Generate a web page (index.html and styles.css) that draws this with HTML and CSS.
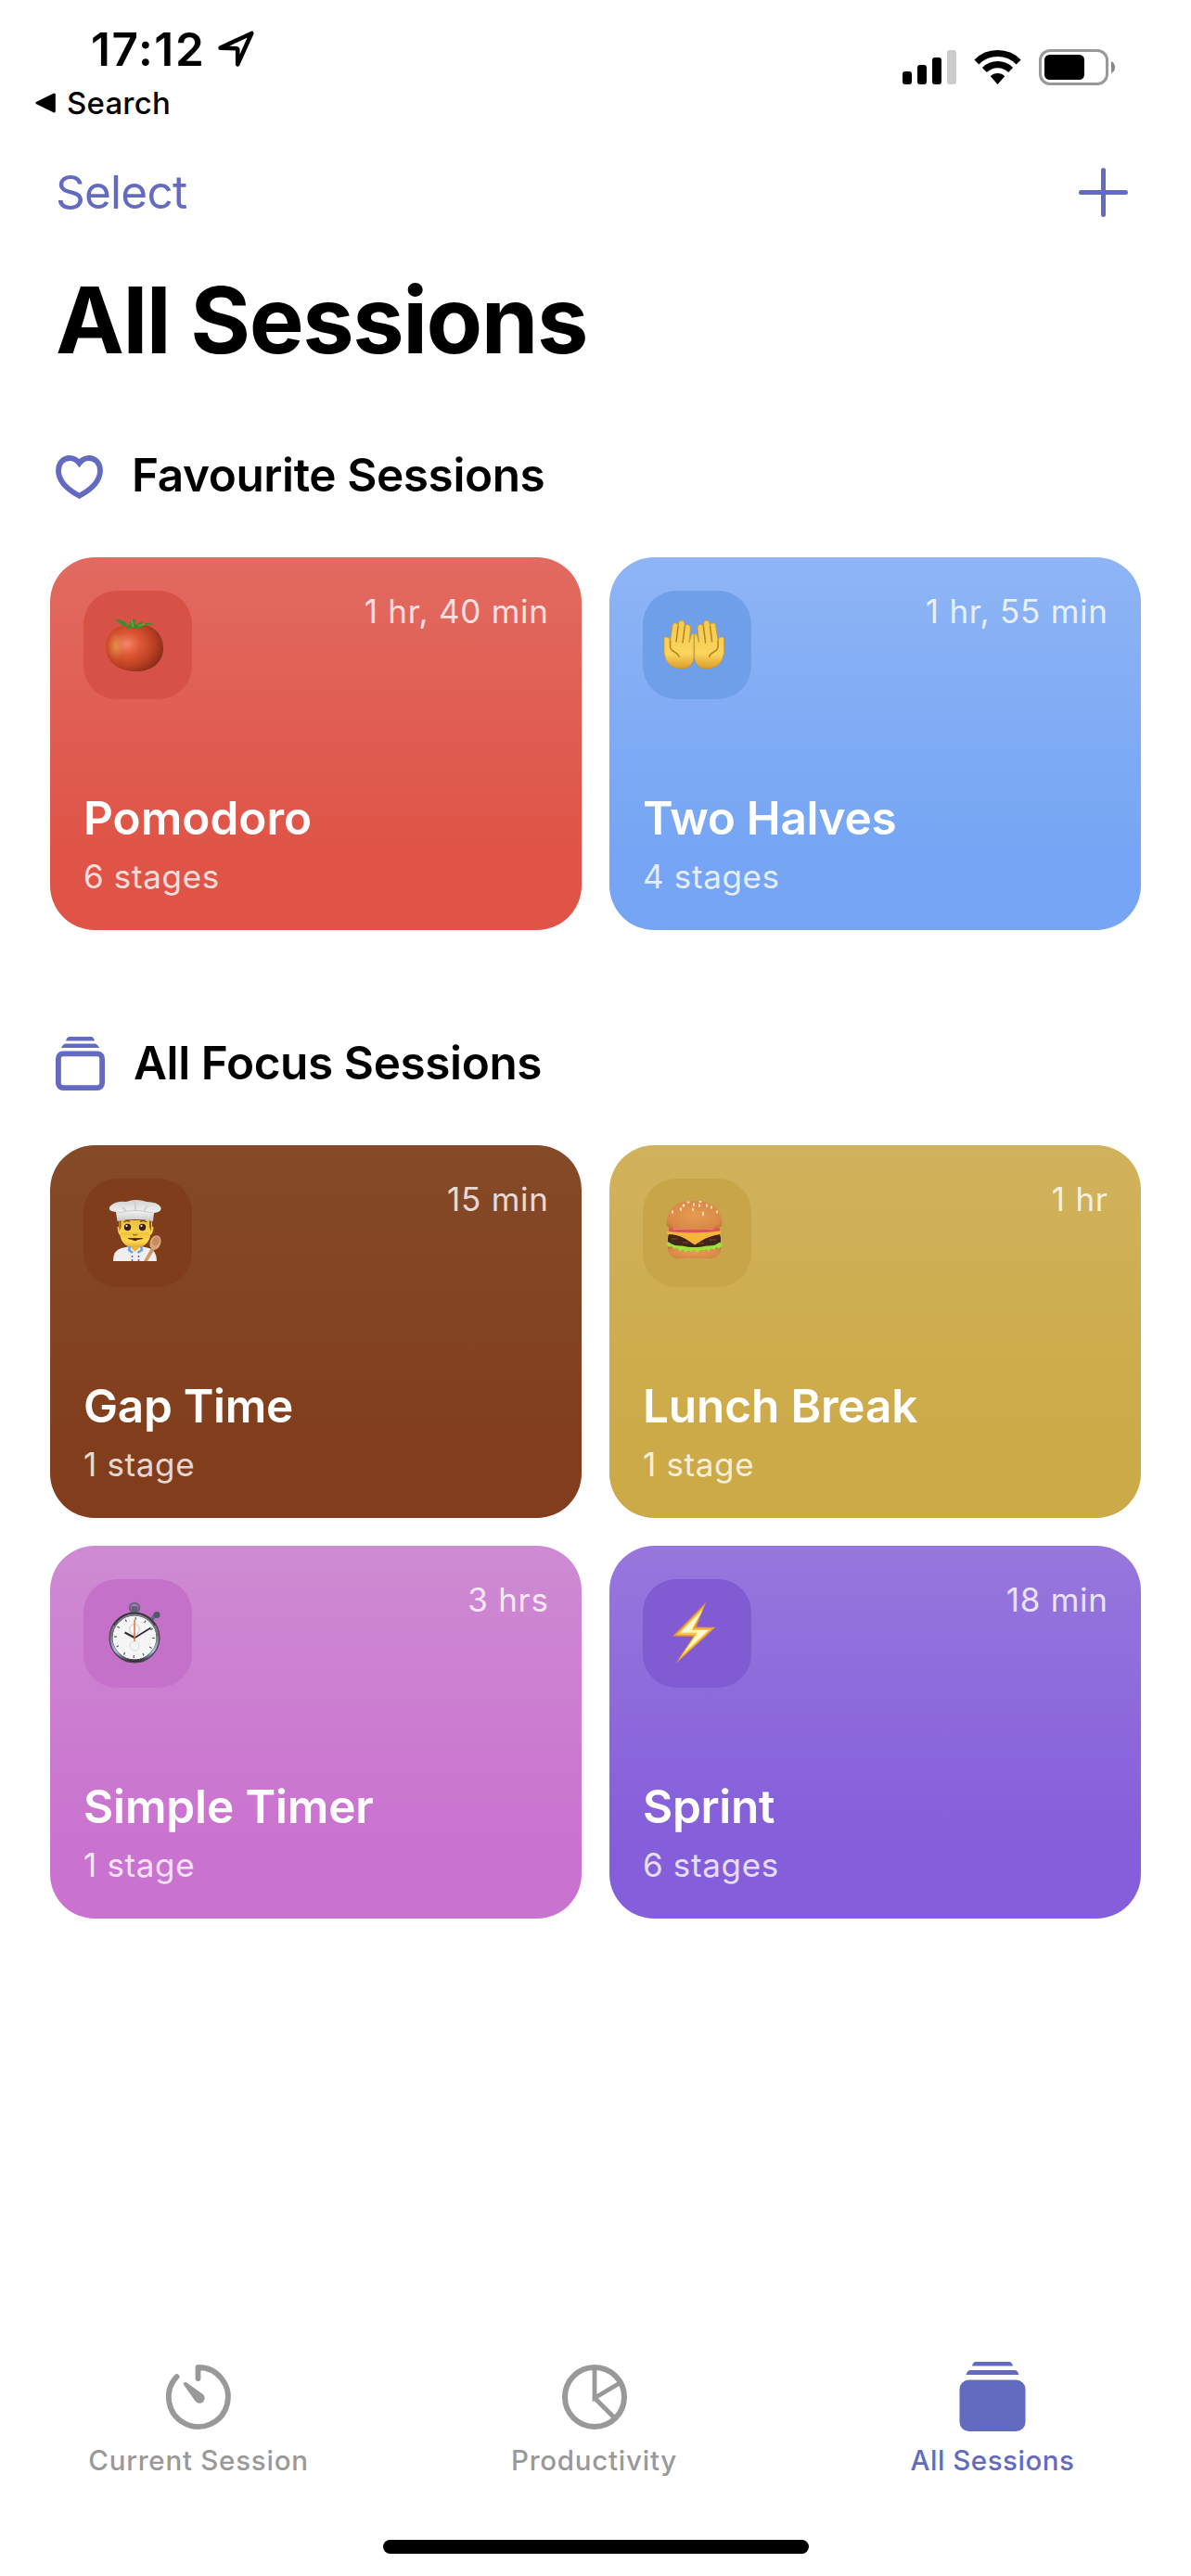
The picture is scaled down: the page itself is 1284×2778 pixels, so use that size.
FILE: index.html
```html
<!DOCTYPE html>
<html lang="en">
<head>
<meta charset="utf-8">
<title>All Sessions</title>
<link rel="stylesheet" href="styles.css">
</head>
<body>
<div class="screen">
  <header class="status">
    <div class="status-left">
      <div class="clock">
        <span class="time">17:12</span>
        <svg class="location" width="40" height="40" viewBox="0 0 40 40"><path d="M3.6 18.6 37.2 3 22.2 36.4V20.2L20.8 19.2Z" fill="none" stroke="#000" stroke-width="4.6" stroke-linejoin="round"/></svg>
      </div>
      <div class="back">
        <svg width="22" height="22" viewBox="0 0 22 22"><path d="M2 11 20.3 2V20Z" stroke="#000" stroke-width="3" stroke-linejoin="round"/></svg>
        <span>Search</span>
      </div>
    </div>
    <div class="status-right">
      <svg class="signal" width="58" height="37" viewBox="0 0 58 37"><rect y="23" width="10" height="14" rx="3"/><rect x="16" y="16" width="10" height="21" rx="3"/><rect x="32" y="8" width="10" height="29" rx="3"/><rect x="48" width="10" height="37" rx="3" fill="#ccc"/></svg>
      <svg class="wifi" width="51" height="37" viewBox="0 0 51 37"><path d="M2.9 12.9A32 32 0 0 1 48.1 12.9M11.4 21.4A20 20 0 0 1 39.6 21.4" fill="none" stroke="#000" stroke-width="7.1"/><path d="M17.8 28.2A11 11 0 0 1 33.2 28.2L25.5 37Z"/></svg>
      <svg class="battery" width="82" height="39" viewBox="0 0 82 39"><rect x="1.5" y="1.5" width="72" height="36" rx="10.5" fill="none" stroke="#999" stroke-width="3"/><rect x="6" y="6" width="43" height="27" rx="5.5"/><path d="M78 13Q82 15 82 19.5T78 26Z" fill="#888"/></svg>
    </div>
  </header>

  <nav class="nav">
    <a class="select">Select</a>
    <svg width="53" height="53" viewBox="0 0 53 53"><path d="M26.5 2.5V50.5M2.5 26.5H50.5" stroke="#636bc0" stroke-width="5" stroke-linecap="round"/></svg>
  </nav>

  <h1>All Sessions</h1>

  <section>
    <h2><svg class="heart" width="51" height="47" viewBox="0 0 51 47"><path d="M25.5 8.6C22.6 4.6 19 3 15 3 8 3 3 8.5 3 16.5 3 27 12 36.500 25.500 43.800 39 36.500 48 27 48 16.500 48 8.500 43 3 36 3 32 3 28.400 4.600 25.500 8.600Z" fill="none" stroke="#636bc0" stroke-width="5.800"/></svg>Favourite Sessions</h2>
    <div class="grid">
      <article class="card red">
        <div class="top">
          <div class="tile">
            <svg width="117" height="117" viewBox="0 0 117 117">
              <defs><radialGradient id="tomato" cx=".36" cy=".42" r=".7"><stop offset="0" stop-color="#f3866a"/><stop offset=".35" stop-color="#dc5633"/><stop offset=".7" stop-color="#b93f21"/><stop offset="1" stop-color="#7e2a18"/></radialGradient>
              <radialGradient id="tomatoGlow" cx=".5" cy=".5" r=".5"><stop offset="0" stop-color="#dca04c" stop-opacity=".8"/><stop offset="1" stop-color="#dc8a3c" stop-opacity="0"/></radialGradient></defs>
              <path d="M24 61C24 45 35 36 53 37 73 34 86 45 86 62 86 77 74 87 57 87 38 87 24 77 24 61Z" fill="url(#tomato)"/>
              <ellipse cx="35" cy="60" rx="9" ry="15" fill="url(#tomatoGlow)"/>
              <path d="M34 30Q43 31 49 38L52 31 56 31 55 38Q62 32 65 34L59 38Q68 33 76 36 66 37 60 41L52 40 47 42 48 39Q41 39 34 30Z" fill="#3f8b2d"/>
              <path d="M52 32 53.500 39M59 38 66 36" stroke="#67b545" stroke-width="1.200"/>
            </svg>
          </div>
          <span class="duration">1 hr, 40 min</span>
        </div>
        <h3>Pomodoro</h3><p>6 stages</p>
      </article>
      <article class="card blue">
        <div class="top">
          <div class="tile">
            <svg width="117" height="117" viewBox="0 0 117 117">
              <defs><linearGradient id="skin" x2="0" y2="1"><stop offset="0" stop-color="#f3cb50"/><stop offset=".7" stop-color="#fad45c"/><stop offset="1" stop-color="#dc9c28"/></linearGradient>
              <g id="hand"><path d="M23 53Q23 49 26 50 29 50 29.500 54L32 38Q32.500 34 36 35 39 36 38 39 38 32 42 32 45.500 32 45.200 39 46 36 49 36.500 52 37 51.500 41L50 56 52 49Q53 45 55 47V72Q54 84 41 84 25 83 23 67Z" fill="url(#skin)" stroke="#cf9426" stroke-width=".8"/><path d="M38 39 36 55M45.200 39 43 56M29.500 54V61Q30 64 34 66 38 68 39 71" fill="none" stroke="#bd7f1e" stroke-width="1.500" stroke-linecap="round"/></g></defs>
              <use href="#hand"/><use href="#hand" transform="matrix(-1 0 0 1 110.600 0)"/>
            </svg>
          </div>
          <span class="duration">1 hr, 55 min</span>
        </div>
        <h3>Two Halves</h3><p>4 stages</p>
      </article>
    </div>
  </section>

  <section>
    <h2><svg class="stack" width="53" height="58" viewBox="0 0 53 58" fill="#636bc0"><path d="M11 4.500Q12 0 15 0H38Q41 0 42 4.500ZM6 12Q8 7.500 11 7.500H42Q45 7.500 47 12Z"/><rect x="2.900" y="18.400" width="47.200" height="36.700" rx="5" fill="none" stroke="#636bc0" stroke-width="5.800"/></svg>All Focus Sessions</h2>
    <div class="grid">
      <article class="card brown">
        <div class="top">
          <div class="tile">
            <svg width="117" height="117" viewBox="0 0 117 117">
              <defs><linearGradient id="hat" x2="0" y2="1"><stop offset="0" stop-color="#d2d2d2"/><stop offset=".55" stop-color="#f0f0f0"/><stop offset="1" stop-color="#c8c8c8"/></linearGradient>
              <linearGradient id="face" x2="0" y2="1"><stop offset="0" stop-color="#ecc13c"/><stop offset=".6" stop-color="#ffd84e"/><stop offset="1" stop-color="#e5ab2c"/></linearGradient></defs>
              <path d="M38 45H74V52H75.500Q75 60 72 61 70 74 55.700 74 42 74 39.500 61 37 60 36.500 52H38Z" fill="url(#face)"/>
              <path d="M38.500 44V57L40.500 52V45M73 44V57L71 52V45" fill="#8f5b23"/>
              <path d="M49 69H62V80H49Z" fill="#eab736"/>
              <path d="M39.500 61C42 72 48 74 55.700 74S69.500 72 72 61L70 58H41Z" fill="url(#face)"/>
              <path d="M32 89Q32 77 41 75L50 73 55.500 79 62 73 71 75Q79 78 79 89Z" fill="#efeff0"/>
              <path d="M50 73 49 77 53 80M62 73 63 77 58.500 80" fill="none" stroke="#6f9bdf" stroke-width="2.500"/>
              <g fill="#4267c0"><circle cx="52.500" cy="84" r="1"/><circle cx="59.500" cy="84" r="1"/><circle cx="52.500" cy="88" r="1"/><circle cx="59.500" cy="88" r="1"/></g>
              <path d="M36.500 46 35 36Q25 35 28.500 30 34 24 46 25 57 21 68 25 80 25 83.500 31 85 36 76 37L75 46Q56 42 36.500 46Z" fill="url(#hat)"/>
              <path d="M37 37Q56 32 75 37" fill="none" stroke="#c6c6c6" stroke-width="1.200"/><path d="M42 31 46 35M56 26V34M69 29 65 35" stroke="#c3c3c3" stroke-width="1.200"/>
              <g fill="#3b210b"><circle cx="47.500" cy="52.500" r="3.700"/><circle cx="63.500" cy="52.500" r="3.700"/></g><g fill="#fff"><circle cx="46.500" cy="51" r="1.100"/><circle cx="62.500" cy="51" r="1.100"/></g>
              <path d="M43.500 47Q47 44.500 50 46.500M61 46.500Q65 44.500 68 47" fill="none" stroke="#7b4a1b" stroke-width="1.500"/>
              <path d="M53 60Q55.500 62 58 60" fill="none" stroke="#ae7418" stroke-width="1.500"/><path d="M48 64.500H64L59 65.500Q55.500 68 52 65.500Z" fill="#3b1a0a" stroke="#643311"/>
              <path d="M65 89 73.500 74 77 76 69 89Z" fill="#cf976a"/><ellipse cx="77.500" cy="69" rx="5.800" ry="8" transform="rotate(20 77.500 69)" fill="#d9a477"/><ellipse cx="78" cy="67.500" rx="3.600" ry="5" transform="rotate(20 78 67.500)" fill="#c68b60"/>
            </svg>
          </div>
          <span class="duration">15 min</span>
        </div>
        <h3>Gap Time</h3><p>1 stage</p>
      </article>
      <article class="card gold">
        <div class="top">
          <div class="tile">
            <svg width="117" height="117" viewBox="0 0 117 117">
              <defs><radialGradient id="bun" cx=".5" cy=".5" r=".7"><stop offset="0" stop-color="#e79a50"/><stop offset=".7" stop-color="#d98a48"/><stop offset="1" stop-color="#b5672f"/></radialGradient></defs>
              <path d="M27 73H84V77Q83 86 70 86H41Q28 86 27 77Z" fill="url(#bun)"/>
              <rect x="27" y="57" width="57" height="17" rx="7" fill="#42261a"/>
              <path d="M31 65H37M43 69H49M60 70H66M72 66H79M46 64H49" stroke="#6d3f29" stroke-width="1.500"/>
              <path d="M25.500 70Q28 67 30 70 35 73 42 72.500 56 76 69 72.500 78 73 82 69 87 69 85 73 83 74 82 76 79 72 77 77 73 73 71 79 68 74 66 78 62 75 59 80 56 75 52 79 49 75 46 80 43 74 40 79 37 73 34 76 31 72 28 74Z" fill="#9ce33f"/>
              <rect x="28" y="51" width="55" height="9" rx="4" fill="#df555b"/><path d="M33 54H76" stroke="#f79090" stroke-width="1.500"/>
              <path d="M25.500 57Q54 60 85 56.500L83 60Q72 62 65 66L56 71.500 46 65Q37 60 27 60Z" fill="#f6b63c"/>
              <path d="M25.500 49Q26 24 55.500 24T85.500 49Q86 53 78 53.500 55 57 33 53.500 25 53 25.500 49Z" fill="url(#bun)"/>
              <g fill="#f9e3b7"><ellipse cx="44" cy="29" rx="1.300" ry="1.800"/><ellipse cx="49" cy="25.500" rx="1.600" ry="1.100"/><ellipse cx="55" cy="28" rx="1" ry="1.900"/><ellipse cx="61" cy="29" rx="1" ry="1.900"/><ellipse cx="69" cy="29" rx="1.200" ry="1.700"/><ellipse cx="62" cy="25" rx="1.600" ry="1"/><ellipse cx="41" cy="33" rx="1" ry="2"/><ellipse cx="54" cy="33.500" rx="1" ry="2"/><ellipse cx="65" cy="38" rx="1" ry="2.400"/><ellipse cx="74" cy="31" rx="1" ry="1.800"/><ellipse cx="32" cy="36" rx="1" ry="2"/><ellipse cx="80" cy="36" rx="1" ry="1.800"/></g>
            </svg>
          </div>
          <span class="duration">1 hr</span>
        </div>
        <h3>Lunch Break</h3><p>1 stage</p>
      </article>
      <article class="card pink">
        <div class="top">
          <div class="tile">
            <svg width="117" height="117" viewBox="0 0 117 117">
              <defs><linearGradient id="rim" x1="0" y1="0" x2="0" y2="1"><stop offset="0" stop-color="#7f8598"/><stop offset=".45" stop-color="#737373"/><stop offset=".8" stop-color="#a9c2e2"/><stop offset="1" stop-color="#34323a"/></linearGradient></defs>
              <circle cx="55" cy="31" r="5.200" fill="none" stroke="#66687c" stroke-width="2"/><rect x="51.500" y="29" width="7" height="8" rx="2" fill="#5d6277"/>
              <path d="M73 44 78 38" stroke="#666b7b" stroke-width="4"/><circle cx="79" cy="38.500" r="3.500" fill="#545969"/>
              <circle cx="55" cy="63" r="25.500" fill="#f5f5f5" stroke="#4a4450" stroke-width="4"/><circle cx="55" cy="63" r="25" fill="none" stroke="url(#rim)" stroke-width="2.500"/>
              <path d="M33 50A25 25 0 0 1 77 50" fill="none" stroke="#3e3239" stroke-width="1.500"/>
              <circle cx="55" cy="63" r="20.500" fill="none" stroke="#555" stroke-width="2.800" stroke-dasharray="1.200 9.534"/>
              <circle cx="55" cy="54" r="5.500" fill="none" stroke="#ccc"/><circle cx="55" cy="72" r="5" fill="none" stroke="#ddd"/>
              <path d="M55 63 44.500 57.500" stroke="#2d2d2d" stroke-width="2"/><path d="M54 64 72.500 52.500" stroke="#2d2d3c" stroke-width="1.700"/><path d="M55 44V67" stroke="#ec6d3c" stroke-width="1.500"/>
            </svg>
          </div>
          <span class="duration">3 hrs</span>
        </div>
        <h3>Simple Timer</h3><p>1 stage</p>
      </article>
      <article class="card purple">
        <div class="top">
          <div class="tile">
            <svg width="117" height="117" viewBox="0 0 117 117">
              <defs><linearGradient id="bolt" x2="1" y2="1"><stop offset=".35" stop-color="#fbfbd8"/><stop offset=".5" stop-color="#fdf6a5"/><stop offset=".7" stop-color="#fffde0"/></linearGradient></defs>
              <path d="M68.200 25 57.500 51.500 78.500 51.800 35.500 91 54.500 61.800 32.300 61.500Z" fill="#ec9c33"/>
              <path d="M66 29.500 54 53.600 74.500 53.500 39 86.500 57 60 36.500 60Z" fill="#fbc93e"/>
              <path d="M64.500 33 52.500 55 70.500 55 44 80 59 57.800 40.500 57.500Z" fill="url(#bolt)"/>
            </svg>
          </div>
          <span class="duration">18 min</span>
        </div>
        <h3>Sprint</h3><p>6 stages</p>
      </article>
    </div>
  </section>

  <footer class="tabs">
    <a class="tab"><svg width="80" height="80" viewBox="0 0 80 80"><path d="M16.600 18A32 32 0 1 0 39.500 8V20" fill="none" stroke="#999" stroke-width="5.800" stroke-linecap="round" stroke-linejoin="round"/><path d="M23.700 26.300Q23.800 23.600 26.500 24L44.500 36.800A5.600 5.600 0 1 1 36.600 44.600Z" fill="#999"/></svg><span>Current Session</span></a>
    <a class="tab mid"><svg width="80" height="80" viewBox="0 0 80 80"><g fill="none" stroke="#999"><circle cx="40" cy="40" r="32" stroke-width="6"/><path d="M40 9V41L67 25M40 41 61 62" stroke-width="4.800"/></g></svg><span>Productivity</span></a>
    <a class="tab on"><svg width="80" height="80" viewBox="0 0 80 80" fill="#636bc0"><path d="M18 6.500Q19 2 22 2H58Q61 2 62 6.500ZM11.500 16Q13 11 16 11H64Q67 11 68.500 16Z"/><rect x="4.500" y="21.500" width="71" height="55.500" rx="10"/></svg><span>All Sessions</span></a>
  </footer>
  <div class="home"></div>
</div>
</body>
</html>
```
FILE: styles.css
```css
* { box-sizing: border-box; margin: 0; padding: 0; }
body { background: #fff; color: #000; font-family: Inter, "Liberation Sans", sans-serif; }
svg { display: block; flex: none; }

.screen { width: 1284px; height: 2778px; display: flex; flex-direction: column; }

.status { height: 177px; padding: 23px 82px 0 38px; display: flex; justify-content: space-between; align-items: flex-start; }
.status-left { display: flex; flex-direction: column; gap: 8px; }
.clock { display: flex; align-items: center; gap: 13px; padding-left: 60px; height: 60px; }
.time { font-size: 49.5px; font-weight: 600; line-height: 60px; letter-spacing: 1.6px; }
.back { display: flex; align-items: center; gap: 12px; font-size: 33px; font-weight: 500; line-height: 40px; letter-spacing: .2px; }
.status-right { display: flex; align-items: center; margin-top: 30px; }
.wifi { margin-left: 19px; }
.battery { margin-left: 19px; }

.nav { height: 60px; padding: 0 68px 0 60px; display: flex; justify-content: space-between; align-items: center; }
.select { font-size: 49.5px; line-height: 60px; letter-spacing: -.75px; color: #636bc0; }

h1 { margin: 48px 0 0 60px; font-size: 99px; font-weight: 700; line-height: 120px; letter-spacing: -1.44px; }

section { padding: 0 54px; margin-top: 77px; }
section + section { margin-top: 113px; }
h2 { display: flex; align-items: center; gap: 31px; padding-left: 6px; font-size: 49.5px; font-weight: 600; line-height: 60px; letter-spacing: -.4px; }
.heart { margin-top: 5px; }
.stack { margin-top: 2px; }

.grid { display: grid; grid-template-columns: 573px 573px; gap: 30px; margin-top: 59px; }
.card { height: 402px; padding: 36px; border-radius: 48px; color: #fff; display: flex; flex-direction: column; }
.top { display: flex; justify-content: space-between; align-items: flex-start; }
.tile { width: 117px; height: 117px; border-radius: 36px; }
.duration { font-size: 35px; line-height: 44px; letter-spacing: .75px; margin-right: -.75px; opacity: .8; }
.card h3 { margin-top: auto; font-size: 49.5px; font-weight: 600; line-height: 60px; letter-spacing: -.3px; }
.card p { margin-top: 11px; font-size: 35px; line-height: 44px; letter-spacing: .65px; opacity: .8; }

.red { background: linear-gradient(#e26a60, #df5447 78%); }
.red .tile { background: #d85146; }
.red h3 { letter-spacing: 0; }
.blue { background: linear-gradient(#8eb5f6, #75a5f4 80%); }
.blue .tile { background: #709fea; }
.brown { background: linear-gradient(#854a28, #823e1c 80%); }
.brown .tile { background: #7f3d1b; }
.gold { background: linear-gradient(#d1b25c, #cdaa48 80%); }
.gold .tile { background: #c8a548; }
.gold h3, .pink h3 { letter-spacing: -.13px; }
.pink { background: linear-gradient(#ce8bd3, #ca72cf 80%); }
.pink .tile { background: #c570c9; }
.purple { background: linear-gradient(#9777dd, #855edb 80%); }
.purple .tile { background: #815bd2; }

.tabs { margin-top: auto; height: 194px; display: grid; grid-template-columns: repeat(3, 1fr); }
.tab { display: flex; flex-direction: column; align-items: center; gap: 10px; color: #999; }
.tab span { font-size: 29.5px; font-weight: 500; line-height: 36px; letter-spacing: .75px; }
.mid { padding-right: 3px; }
.on { color: #636bc0; }
.on span { letter-spacing: .53px; }
.home { flex: none; width: 459px; height: 15px; margin: 0 auto 24px; border-radius: 8px; background: #000; }
```
